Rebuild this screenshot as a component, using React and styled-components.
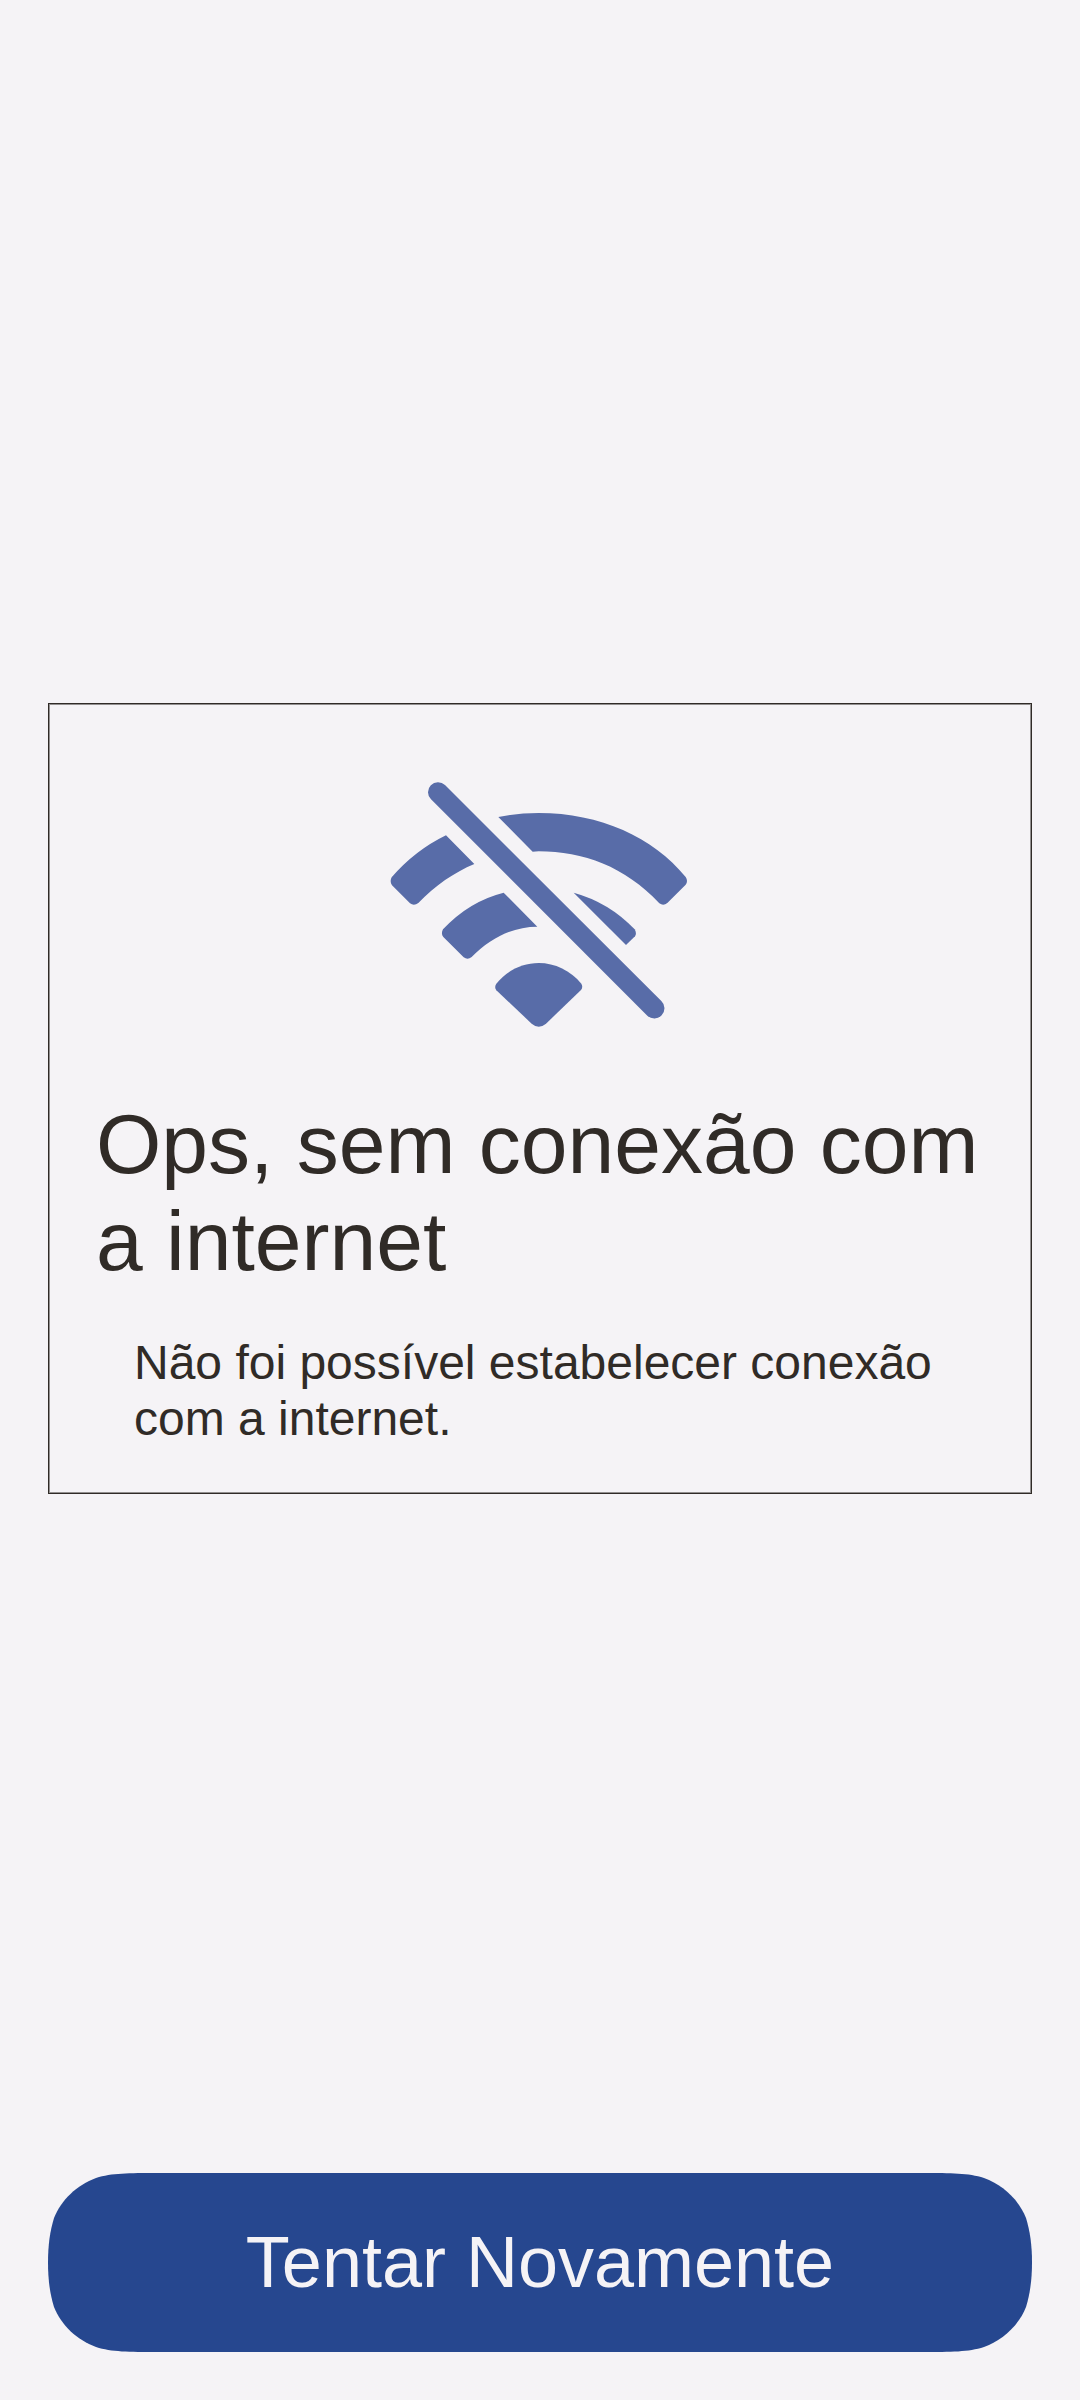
import React from "react";
import styled, { createGlobalStyle } from "styled-components";

const GlobalStyle = createGlobalStyle`
  * {
    box-sizing: border-box;
  }
  body {
    margin: 0;
    background: #f5f3f6;
    color: #302b27;
    font-family: "Liberation Sans", Arial, Helvetica, sans-serif;
  }
`;

const Screen = styled.main`
  display: flex;
  flex-direction: column;
  gap: 24px;
  min-height: 100vh;
  padding: 48px;
`;

const Content = styled.div`
  display: flex;
  flex: 1;
  flex-direction: column;
  justify-content: center;
`;

const Card = styled.section`
  display: flex;
  flex-direction: column;
  align-items: center;
  padding: 47px 47px 46px;
  border: 1px solid #302b27;
  box-shadow: inset 0 0 0 1px #928f8f;
`;

const OfflineIcon = styled.svg`
  display: block;
  width: 340px;
  height: 296px;
  margin-bottom: 49px;
  fill: #586ca8;
`;

const Title = styled.h1`
  width: 100%;
  margin: 0 0 45px;
  font-size: 84px;
  font-weight: 400;
  line-height: 97px;
`;

const Message = styled.p`
  width: 100%;
  margin: 0;
  padding: 0 38px;
  font-size: 48px;
  line-height: 56px;
`;

const RetryButton = styled.button`
  width: 100%;
  padding: 48px;
  border: 0;
  border-radius: 80px;
  background: #26478f;
  color: #f5f3f6;
  font-family: inherit;
  font-size: 72px;
  line-height: 83px;
  cursor: pointer;

  /* Continuous-curvature corners */
  @supports (clip-path: shape(from 0px 0px, line to 1px 1px)) {
    border-radius: 0;
    clip-path: shape(
      from 110px 0px,
      line to calc(100% - 110px) 0px,
      curve to calc(100% - 48px) 5px with calc(100% - 80px) 0px / calc(100% - 64px) 0px,
      curve to calc(100% - 6px) 45px with calc(100% - 29px) 12px / calc(100% - 13px) 27px,
      curve to 100% 50% with calc(100% - 2px) 58px / 100% 72px,
      curve to calc(100% - 6px) calc(100% - 45px) with 100% calc(100% - 72px) / calc(100% - 2px) calc(100% - 58px),
      curve to calc(100% - 48px) calc(100% - 5px) with calc(100% - 13px) calc(100% - 27px) / calc(100% - 29px) calc(100% - 12px),
      curve to calc(100% - 110px) 100% with calc(100% - 64px) 100% / calc(100% - 80px) 100%,
      line to 110px 100%,
      curve to 48px calc(100% - 5px) with 80px 100% / 64px 100%,
      curve to 6px calc(100% - 45px) with 29px calc(100% - 12px) / 13px calc(100% - 27px),
      curve to 0px 50% with 2px calc(100% - 58px) / 0px calc(100% - 72px),
      curve to 6px 45px with 0px 72px / 2px 58px,
      curve to 48px 5px with 13px 27px / 29px 12px,
      curve to 110px 0px with 64px 0px / 80px 0px,
      close
    );
  }
`;

function WifiOff() {
  return (
    <OfflineIcon viewBox="0 -27 1020 888" aria-hidden="true">
      <path d="M225 75L874 723A30 30 0 0 1 832 767L183 118A30 30 0 0 1 225 75Z" />
      <path d="M385 171Q445 159 506 159C690 159 850 232 947 351Q955 363 947 374L892 429Q880 439 868 430C765 320 640 274 506 274L488 275Z" />
      <path d="M228 226L313 312C253 337 195 377 145 429Q132 439 120 430L66 376Q58 365 65 352Q135 271 228 226Z" />
      <path d="M401 398L502 500C430 500 362 533 305 591Q293 601 281 592L220 531Q212 521 219 508Q297 424 401 398Z" />
      <path d="M611 398Q717 427 794 508Q801 520 795 529L768 555Z" />
      <path d="M506 609C555 609 602 632 634 671Q640 681 633 690L528 791Q506 809 485 791L379 691Q372 681 379 671C411 632 456 609 506 609Z" />
    </OfflineIcon>
  );
}

export default function App() {
  return (
    <>
      <GlobalStyle />
      <Screen>
        <Content>
          <Card>
            <WifiOff />
            <Title>Ops, sem conexão com a internet</Title>
            <Message>
              Não foi possível estabelecer conexão com a internet.
            </Message>
          </Card>
        </Content>
        <RetryButton type="button">Tentar Novamente</RetryButton>
      </Screen>
    </>
  );
}
